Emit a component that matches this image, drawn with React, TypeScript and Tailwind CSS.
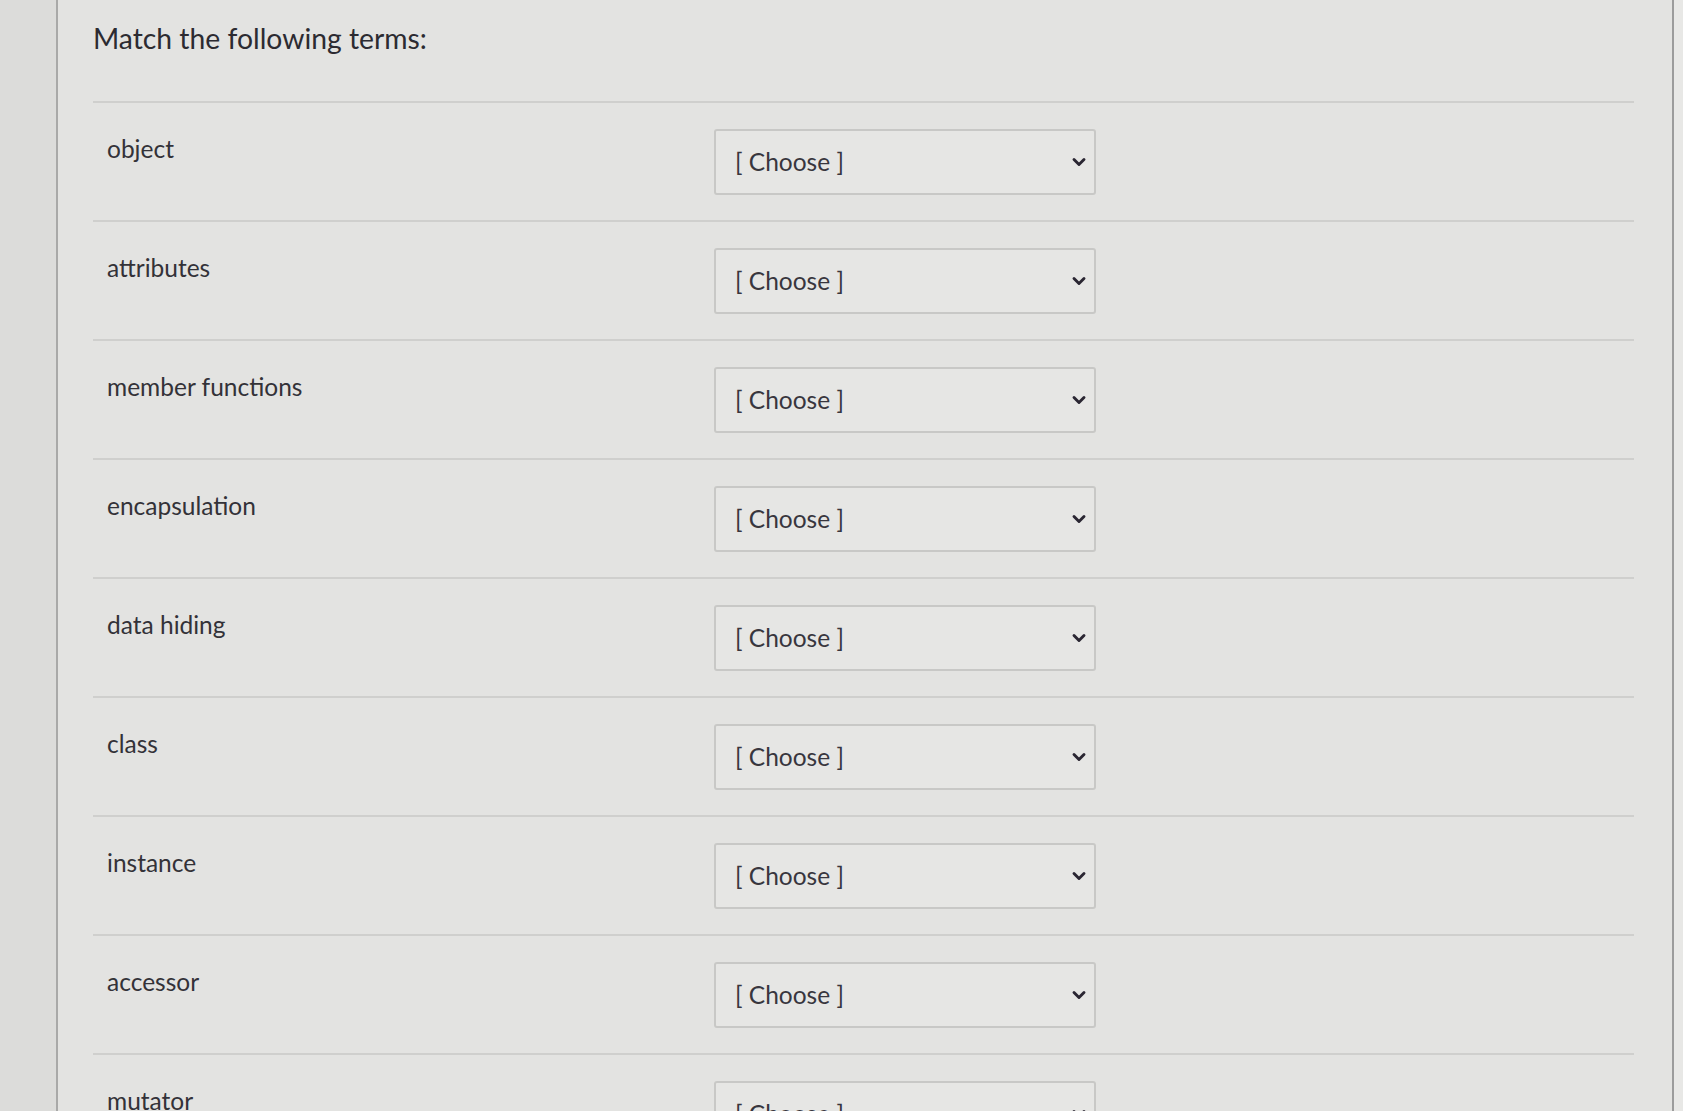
import { ChevronDown } from 'lucide-react';

const terms = [
  'object',
  'attributes',
  'member functions',
  'encapsulation',
  'data hiding',
  'class',
  'instance',
  'accessor',
  'mutator',
];

function ChooseSelect() {
  return (
    <div className="flex h-[66px] w-[382px] items-center justify-between rounded-[3px] border-2 border-[#c8c8c6] bg-[#e6e6e4] pl-[19px] pr-[5px]">
      <span className="text-[24.5px] text-[#38363e]">[ Choose ]</span>
      <ChevronDown className="h-[20px] w-[20px] text-[#2a2632]" strokeWidth={3.5} />
    </div>
  );
}

export default function App() {
  return (
    <div
      className="flex h-[1111px] w-full overflow-hidden bg-[#e3e3e1] text-[#333238]"
      style={{ fontFamily: 'Lato, "Open Sans", sans-serif' }}
    >
      <div className="w-[58px] shrink-0 border-r-2 border-[#a9a9a8] bg-[#dcdcda]" />
      <main className="flex-1 pl-[35px] pr-[38px]">
        <h1 className="pt-[19px] text-[28.3px] leading-[38px] text-[#2c2b31]">Match the following terms:</h1>
        <div className="mt-[44px]">
          {terms.map((term) => (
            <div key={term} className="flex border-t-2 border-[#cfcfcd] pt-[26px] pb-[25px]">
              <div className="w-[621px] shrink-0 pl-[14px] pt-[4px] text-[24.5px] leading-[32px]">{term}</div>
              <ChooseSelect />
            </div>
          ))}
        </div>
      </main>
      <div className="w-[11px] shrink-0 border-l-2 border-[#9c9c9c] bg-[#e8e8e6]" />
    </div>
  );
}
